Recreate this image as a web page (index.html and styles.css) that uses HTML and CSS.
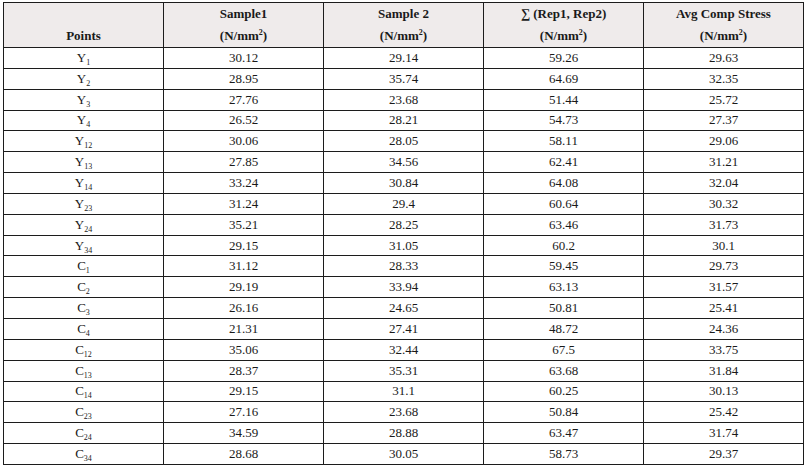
FILE: index.html
```html
<!DOCTYPE html>
<html>
<head>
<meta charset="utf-8">
<link rel="stylesheet" href="styles.css">
</head>
<body>
<table class="data">
  <thead>
    <tr>
      <th class="first">Points</th>
      <th>Sample1<br>(N/mm<sup>2</sup>)</th>
      <th>Sample 2<br>(N/mm<sup>2</sup>)</th>
      <th>∑ (Rep1, Rep2)<br>(N/mm<sup>2</sup>)</th>
      <th>Avg Comp Stress<br>(N/mm<sup>2</sup>)</th>
    </tr>
  </thead>
  <tbody>
    <tr><td>Y<sub>1</sub></td><td>30.12</td><td>29.14</td><td>59.26</td><td>29.63</td></tr>
    <tr><td>Y<sub>2</sub></td><td>28.95</td><td>35.74</td><td>64.69</td><td>32.35</td></tr>
    <tr><td>Y<sub>3</sub></td><td>27.76</td><td>23.68</td><td>51.44</td><td>25.72</td></tr>
    <tr><td>Y<sub>4</sub></td><td>26.52</td><td>28.21</td><td>54.73</td><td>27.37</td></tr>
    <tr><td>Y<sub>12</sub></td><td>30.06</td><td>28.05</td><td>58.11</td><td>29.06</td></tr>
    <tr><td>Y<sub>13</sub></td><td>27.85</td><td>34.56</td><td>62.41</td><td>31.21</td></tr>
    <tr><td>Y<sub>14</sub></td><td>33.24</td><td>30.84</td><td>64.08</td><td>32.04</td></tr>
    <tr><td>Y<sub>23</sub></td><td>31.24</td><td>29.4</td><td>60.64</td><td>30.32</td></tr>
    <tr><td>Y<sub>24</sub></td><td>35.21</td><td>28.25</td><td>63.46</td><td>31.73</td></tr>
    <tr><td>Y<sub>34</sub></td><td>29.15</td><td>31.05</td><td>60.2</td><td>30.1</td></tr>
    <tr><td>C<sub>1</sub></td><td>31.12</td><td>28.33</td><td>59.45</td><td>29.73</td></tr>
    <tr><td>C<sub>2</sub></td><td>29.19</td><td>33.94</td><td>63.13</td><td>31.57</td></tr>
    <tr><td>C<sub>3</sub></td><td>26.16</td><td>24.65</td><td>50.81</td><td>25.41</td></tr>
    <tr><td>C<sub>4</sub></td><td>21.31</td><td>27.41</td><td>48.72</td><td>24.36</td></tr>
    <tr><td>C<sub>12</sub></td><td>35.06</td><td>32.44</td><td>67.5</td><td>33.75</td></tr>
    <tr><td>C<sub>13</sub></td><td>28.37</td><td>35.31</td><td>63.68</td><td>31.84</td></tr>
    <tr><td>C<sub>14</sub></td><td>29.15</td><td>31.1</td><td>60.25</td><td>30.13</td></tr>
    <tr><td>C<sub>23</sub></td><td>27.16</td><td>23.68</td><td>50.84</td><td>25.42</td></tr>
    <tr><td>C<sub>24</sub></td><td>34.59</td><td>28.88</td><td>63.47</td><td>31.74</td></tr>
    <tr><td>C<sub>34</sub></td><td>28.68</td><td>30.05</td><td>58.73</td><td>29.37</td></tr>
  </tbody>
</table>
</body>
</html>
```
FILE: styles.css
```css
html, body {
  margin: 0;
  padding: 0;
  background: #ffffff;
}
body {
  padding: 2px 0 0 3px;
  font-family: "Liberation Serif", "DejaVu Serif", serif;
  color: #1a1a1a;
}
.data {
  border-collapse: collapse;
  width: 801px;
  table-layout: fixed;
  font-size: 13px;
}
.data th, .data td {
  border: 1px solid #1c1c1c;
  text-align: center;
  padding: 0;
}
.data th {
  background: #efebeb;
  font-weight: bold;
  line-height: 22px;
  vertical-align: bottom;
}
.data sup {
  font-size: 8px;
  vertical-align: 5px;
  line-height: 0;
}
.data tbody tr {
  height: 20.85px;
}
.data td {
  line-height: 16px;
}
.data sub {
  font-size: 8px;
  vertical-align: -3px;
  line-height: 0;
}
```
